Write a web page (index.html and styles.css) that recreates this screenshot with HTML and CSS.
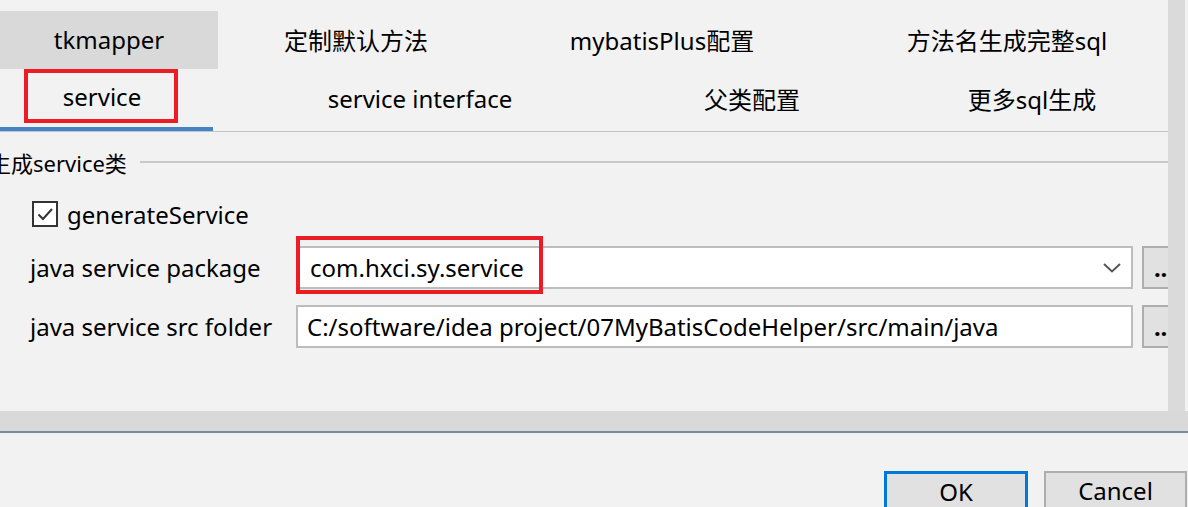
FILE: index.html
```html
<!DOCTYPE html>
<html>
<head>
<meta charset="utf-8">
<link rel="stylesheet" href="styles.css">
</head>
<body>
<div class="window">
  <div class="top">
    <div class="content">
      <div class="tabrow row1">
        <div class="tab t1 active-gray">tkmapper</div>
        <div class="tab t2">定制默认方法</div>
        <div class="tab t3">mybatisPlus配置</div>
        <div class="tab t4">方法名生成完整sql</div>
      </div>
      <div class="tabrow row2">
        <div class="tab s1 selected"><span class="hl">service</span></div>
        <div class="tab s2">service interface</div>
        <div class="tab s3">父类配置</div>
        <div class="tab s4">更多sql生成</div>
      </div>
      <div class="group">
        <div class="legend"><span class="legend-text">生成service类</span><span class="legend-line"></span></div>
        <div class="check-row">
          <span class="checkbox">
            <svg width="22" height="22" viewBox="0 0 22 22"><path d="M4.5 11.5 L9 16 L18 6" fill="none" stroke="#333" stroke-width="2"/></svg>
          </span>
          <span class="check-label">generateService</span>
        </div>
        <div class="field-row">
          <span class="label">java service package</span>
          <div class="input combo"><span class="hl-input">com.hxci.sy.service</span>
            <svg class="chev" width="18" height="10" viewBox="0 0 18 10"><path d="M1 1 L9 8.5 L17 1" fill="none" stroke="#555" stroke-width="2"/></svg>
          </div>
          <div class="dots">...</div>
        </div>
        <div class="field-row">
          <span class="label">java service src folder</span>
          <div class="input"><span class="val">C:/software/idea project/07MyBatisCodeHelper/src/main/java</span></div>
          <div class="dots">...</div>
        </div>
      </div>
    </div>
    <div class="vscroll"></div>
  </div>
  <div class="hscroll"></div>
  <div class="footer">
    <div class="btn ok">OK</div>
    <div class="btn cancel">Cancel</div>
  </div>
</div>
</body>
</html>
```
FILE: styles.css
```css
* { box-sizing: border-box; }
html, body {
  margin: 0;
  padding: 0;
  background: #f2f2f2;
  width: 1188px;
  height: 507px;
  overflow: hidden;
  font-family: "Noto Sans", "Noto Sans CJK SC", sans-serif;
  font-size: 24px;
  color: #000;
}
.window {
  display: flex;
  flex-direction: column;
  height: 507px;
}
.top {
  display: flex;
  height: 411px;
  flex: none;
}
.content {
  width: 1168px;
  flex: none;
  overflow: hidden;
  padding-top: 11px;
}
.vscroll {
  width: 17px;
  flex: none;
  background: #dadada;
}
.tabrow {
  display: flex;
  white-space: nowrap;
}
.row1 { height: 58px; }
.row2 {
  height: 63px;
  border-bottom: 1px solid #c4c4c4;
}
.tab {
  display: flex;
  align-items: center;
  justify-content: center;
  flex: none;
}
.row1 .tab { padding-bottom: 2px; }
.active-gray { background: #d9d9d9; }
.t1 { width: 218px; }
.t2 { width: 276px; }
.t3 { width: 336px; }
.t4 { width: 354px; }
.s1 {
  width: 213px;
  justify-content: flex-start;
  align-items: flex-start;
  border-bottom: 4px solid #4185c8;
}
.s2 { width: 414px; }
.s3 { width: 250px; }
.s4 { width: 310px; }
.row2 .tab { height: 62px; padding-bottom: 4px; }
.row2 .s1 { padding-bottom: 0; }
.hl {
  margin-left: 24px;
  width: 154px;
  height: 54px;
  border: 4px solid #ec1c24;
  display: flex;
  align-items: center;
  justify-content: center;
  padding-left: 2px;
}
.group {
  padding-top: 15px;
}
.legend {
  display: flex;
  align-items: center;
  height: 30px;
}
.legend-text {
  margin-left: -11px;
  font-size: 22px;
}
.legend-line {
  flex: 1;
  height: 2px;
  background: #c8c8c8;
  margin-left: 13px;
}
.check-row {
  display: flex;
  align-items: center;
  margin-top: 24px;
  padding-left: 32px;
  height: 26px;
}
.checkbox {
  width: 26px;
  height: 26px;
  flex: none;
  border: 2px solid #333;
  background: #fff;
  display: flex;
  align-items: center;
  justify-content: center;
}
.check-label { margin-left: 9px; }
.field-row {
  display: flex;
  align-items: center;
  padding-left: 30px;
  height: 43px;
}
.check-row + .field-row { margin-top: 19px; }
.field-row + .field-row { margin-top: 16px; }
.label { width: 266px; flex: none; }
.input {
  width: 837px;
  flex: none;
  height: 43px;
  background: #fff;
  border: 2px solid #bdbdbd;
  display: flex;
  align-items: center;
  padding-left: 8px;
  white-space: nowrap;
}
.combo { justify-content: space-between; padding-right: 10px; }
.hl-input {
  margin-left: -10px;
  margin-bottom: 5px;
  height: 58px;
  width: 247px;
  border: 4px solid #ec1c24;
  display: flex;
  align-items: center;
  padding-left: 10px;
  padding-top: 4px;
}
.val { margin-left: 1px; }
.dots {
  margin-left: 9px;
  width: 44px;
  height: 43px;
  flex: none;
  background: #e1e1e1;
  border: 2px solid #adadad;
  display: flex;
  align-items: center;
  justify-content: center;
  font-weight: bold;
}
.hscroll {
  height: 22px;
  flex: none;
  background: #d9d9d9;
  border-bottom: 2px solid #7a8a99;
}
.footer {
  display: flex;
  flex: none;
  justify-content: flex-end;
  gap: 16px;
  padding-top: 38px;
  padding-right: 1px;
}
.btn {
  height: 50px;
  background: #e1e1e1;
  display: flex;
  justify-content: center;
  padding-top: 1px;
}
.ok {
  width: 144px;
  border: 3px solid #0078d7;
}
.cancel {
  width: 143px;
  border: 2px solid #adadad;
}
```
